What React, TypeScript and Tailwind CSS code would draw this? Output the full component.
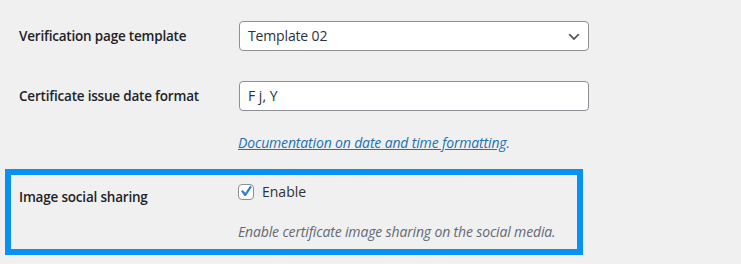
import React from "react";

const font = { fontFamily: '"Segoe UI", "Open Sans", "Noto Sans", sans-serif' };

export default function App() {
  return (
    <div
      className="w-[741px] h-[264px] bg-[#f0f0f1] text-[14px] text-[#1d2327] overflow-hidden"
      style={font}
    >
      <div className="pt-[21px]">
        {/* Row 1 */}
        <div className="flex items-center h-[30px] pl-[19px]">
          <div className="w-[220px] font-semibold text-[13.5px] tracking-[-0.2px] leading-[20px]">Verification page template</div>
          <div className="relative w-[350px] h-[30px] bg-white border border-[#8c8f94] rounded-[4px] flex items-center pl-[8px] text-[#2c3338] tracking-[-0.15px]">
            <span className="leading-[20px]">Template 02</span>
            <svg
              className="absolute right-[6px] top-[7px]"
              width="16"
              height="16"
              viewBox="0 0 20 20"
            >
              <path d="M5 6l5 5 5-5 2 1-7 7-7-7 2-1z" fill="#555" />
            </svg>
          </div>
        </div>

        {/* Row 2 */}
        <div className="flex items-center h-[30px] pl-[19px] mt-[30px]">
          <div className="w-[220px] font-semibold text-[13.5px] tracking-[-0.2px] leading-[20px]">Certificate issue date format</div>
          <div className="w-[350px] h-[30px] bg-white border border-[#8c8f94] rounded-[4px] flex items-center pl-[8px] text-[#2c3338]">
            <span className="leading-[20px]">F j, Y</span>
          </div>
        </div>
        <div className="pl-[238px] mt-[22px] leading-[20px] tracking-[-0.15px]">
          <span className="italic">
            <a className="text-[#2271b1] underline">Documentation on date and time formatting</a>
            <span className="text-[#646970]">.</span>
          </span>
        </div>

        {/* Highlighted Row 3 */}
        <div className="ml-[5px] mt-[16px] w-[578px] h-[86px] border-[6px] border-[#0791f2] flex pl-[8px]">
          <div className="w-[219px] pt-[12px] font-semibold text-[13.5px] tracking-[-0.2px] leading-[20px]">Image social sharing</div>
          <div className="flex flex-col">
            <div className="flex items-center mt-[9px] h-[16px]">
              <span className="relative w-[16px] h-[16px] bg-white border border-[#8c8f94] rounded-[4px]">
                <svg width="21" height="21" viewBox="0 0 20 20" className="absolute left-[-4px] top-[-4px]">
                  <path
                    d="M14.83 4.89l1.34.94-5.81 8.38H9.02L5.78 9.67l1.34-1.12 2.74 2.57 4.97-7.23z"
                    fill="#3582c4"
                  />
                </svg>
              </span>
              <span className="ml-[8px] leading-[20px] text-[#2c3338]">Enable</span>
            </div>
            <div className="mt-[22px] italic text-[#646970] leading-[20px] tracking-[-0.15px]">
              Enable certificate image sharing on the social media.
            </div>
          </div>
        </div>
      </div>
    </div>
  );
}
